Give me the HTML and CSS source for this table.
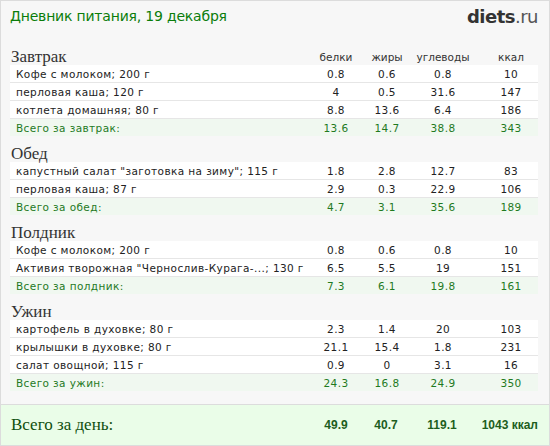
FILE: index.html
```html
<!DOCTYPE html>
<html lang="ru">
<head>
<meta charset="utf-8">
<link rel="stylesheet" href="styles.css">
</head>
<body>
<div class="page">
  <div class="header">
    <div class="title">Дневник питания, 19 декабря</div>
    <div class="logo"><b>diets</b>.ru</div>
  </div>

  <div class="section first">
    <div class="head">
      <div class="meal">Завтрак</div>
      <div class="col">белки</div><div class="col">жиры</div><div class="col">углеводы</div><div class="col kc">ккал</div>
    </div>
    <div class="row"><div class="name">Кофе с молоком; 200 г</div><div class="n">0.8</div><div class="n">0.6</div><div class="n">0.8</div><div class="n kc">10</div></div>
    <div class="row"><div class="name">перловая каша; 120 г</div><div class="n">4</div><div class="n">0.5</div><div class="n">31.6</div><div class="n kc">147</div></div>
    <div class="row"><div class="name">котлета домашняя; 80 г</div><div class="n">8.8</div><div class="n">13.6</div><div class="n">6.4</div><div class="n kc">186</div></div>
    <div class="row total"><div class="name">Всего за завтрак:</div><div class="n">13.6</div><div class="n">14.7</div><div class="n">38.8</div><div class="n kc">343</div></div>
  </div>

  <div class="section">
    <div class="head"><div class="meal">Обед</div></div>
    <div class="row"><div class="name">капустный салат "заготовка на зиму"; 115 г</div><div class="n">1.8</div><div class="n">2.8</div><div class="n">12.7</div><div class="n kc">83</div></div>
    <div class="row"><div class="name">перловая каша; 87 г</div><div class="n">2.9</div><div class="n">0.3</div><div class="n">22.9</div><div class="n kc">106</div></div>
    <div class="row total"><div class="name">Всего за обед:</div><div class="n">4.7</div><div class="n">3.1</div><div class="n">35.6</div><div class="n kc">189</div></div>
  </div>

  <div class="section">
    <div class="head"><div class="meal">Полдник</div></div>
    <div class="row"><div class="name">Кофе с молоком; 200 г</div><div class="n">0.8</div><div class="n">0.6</div><div class="n">0.8</div><div class="n kc">10</div></div>
    <div class="row"><div class="name">Активия творожная "Чернослив-Курага-...; 130 г</div><div class="n">6.5</div><div class="n">5.5</div><div class="n">19</div><div class="n kc">151</div></div>
    <div class="row total"><div class="name">Всего за полдник:</div><div class="n">7.3</div><div class="n">6.1</div><div class="n">19.8</div><div class="n kc">161</div></div>
  </div>

  <div class="section">
    <div class="head"><div class="meal">Ужин</div></div>
    <div class="row"><div class="name">картофель в духовке; 80 г</div><div class="n">2.3</div><div class="n">1.4</div><div class="n">20</div><div class="n kc">103</div></div>
    <div class="row"><div class="name">крылышки в духовке; 80 г</div><div class="n">21.1</div><div class="n">15.4</div><div class="n">1.8</div><div class="n kc">231</div></div>
    <div class="row"><div class="name">салат овощной; 115 г</div><div class="n">0.9</div><div class="n">0</div><div class="n">3.1</div><div class="n kc">16</div></div>
    <div class="row total"><div class="name">Всего за ужин:</div><div class="n">24.3</div><div class="n">16.8</div><div class="n">24.9</div><div class="n kc">350</div></div>
  </div>

  <div class="footer">
    <div class="day">Всего за день:</div>
    <div class="f">49.9</div><div class="f">40.7</div><div class="f">119.1</div><div class="f fk">1043 ккал</div>
  </div>
</div>
</body>
</html>
```

FILE: styles.css
```css
* { box-sizing: border-box; }
html, body { margin: 0; padding: 0; }
body { width: 550px; height: 446px; overflow: hidden; }
.page {
  width: 550px;
  height: 446px;
  border: 1px solid #dcdcdc;
  background: #f7f7f7;
  display: flex;
  flex-direction: column;
  font-family: "DejaVu Sans", Verdana, sans-serif;
}
.header {
  height: 30px;
  padding: 0 11px 0 9px;
  display: flex;
  align-items: center;
  justify-content: space-between;
}
.title {
  font-family: "DejaVu Sans", Tahoma, sans-serif;
  font-size: 14px;
  color: #0a7d0a;
  letter-spacing: -0.2px;
}
.logo {
  font-family: "DejaVu Sans", sans-serif;
  font-size: 18px;
  color: #555;
  letter-spacing: -0.5px;
}
.logo b { color: #333; font-weight: bold; }
.section {
  margin: 8px 11px 0 9px;
}
.section.first { margin-top: 16px; }
.head, .row {
  display: grid;
  grid-template-columns: 301px 50px 52px 60px 64px;
  align-items: center;
}
.head { height: 17px; }
.meal {
  font-family: "Liberation Serif", "Times New Roman", serif;
  font-size: 17px;
  color: #333;
  padding-left: 1px;
}
.col {
  font-size: 10.5px;
  color: #333;
  text-align: center;
}
.kc { padding-left: 12px; }
.row {
  height: 18px;
  background: #fff;
  border-top: 1px solid #e6e6e6;
  font-size: 10.5px;
  color: #222;
  letter-spacing: 0.4px;
}
.row:nth-of-type(2) { border-top: 1px solid #f7f7f7; }
.name {
  padding-left: 6px;
  white-space: nowrap;
  overflow: hidden;
}
.n { text-align: center; }
.row.total {
  background: #f0f8f0;
  color: #1f7a1f;
}
.footer {
  margin-top: auto;
  height: 41px;
  border-top: 1px solid #dcdcdc;
  background: #eafde8;
  display: grid;
  grid-template-columns: 1fr 48px 52px 60px 66px;
  align-items: center;
  padding: 0 11px 0 9px;
}
.day {
  font-family: "Liberation Serif", "Times New Roman", serif;
  font-size: 17px;
  color: #0f4f0f;
  padding-left: 1px;
}
.f {
  font-family: "Liberation Sans", Arial, sans-serif;
  font-weight: bold;
  font-size: 12px;
  color: #1d5e1d;
  text-align: center;
  white-space: nowrap;
}
.fk { text-align: right; }
```
